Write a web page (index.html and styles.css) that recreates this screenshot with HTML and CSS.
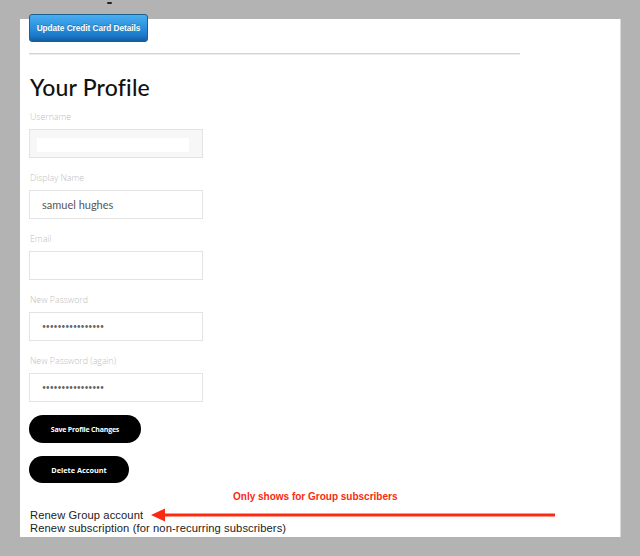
FILE: index.html
```html
<!DOCTYPE html>
<html>
<head>
<meta charset="utf-8">
<link rel="stylesheet" href="styles.css">
</head>
<body>
<div class="peek"></div>
<div class="panel">
  <button class="btn-blue">Update Credit Card Details</button>
  <div class="rule"></div>
  <h1 class="title">Your Profile</h1>
  <div class="fields">
    <div class="field">
      <label class="label">Username</label>
      <div class="box box-disabled"><div class="inner"></div></div>
    </div>
    <div class="field">
      <label class="label">Display Name</label>
      <div class="box">samuel hughes</div>
    </div>
    <div class="field">
      <label class="label">Email</label>
      <div class="box"></div>
    </div>
    <div class="field">
      <label class="label">New Password</label>
      <div class="box dots">••••••••••••••••</div>
    </div>
    <div class="field">
      <label class="label">New Password (again)</label>
      <div class="box dots">••••••••••••••••</div>
    </div>
  </div>
  <div class="actions">
    <button class="btn-black btn-save">Save Profile Changes</button>
    <button class="btn-black btn-delete">Delete Account</button>
  </div>
  <div class="renew">
    <div class="note">Only shows for Group subscribers</div>
    <div class="link-line">Renew Group account</div>
    <div class="link-line">Renew subscription (for non-recurring subscribers)</div>
    <svg class="arrow" width="404" height="16" viewBox="0 0 404 16">
      <polygon points="0,8 14,1.5 14,14.5" fill="#fb2a12"/>
      <rect x="12" y="6.5" width="392" height="3" fill="#fb2a12"/>
    </svg>
  </div>
</div>
</body>
</html>
```
FILE: styles.css
```css
* { box-sizing: border-box; }
html, body { margin: 0; padding: 0; }
body {
  background: #b3b3b3;
  width: 640px;
  height: 556px;
  overflow: hidden;
  font-family: "Open Sans", "Liberation Sans", sans-serif;
}
.peek {
  width: 5px;
  height: 2px;
  margin-left: 107px;
  margin-top: 2px;
  background: #222;
  border-radius: 1px;
}
.panel {
  display: flow-root;
  position: relative;
  margin-left: 20px;
  margin-top: 15px;
  width: 601px;
  height: 518px;
  background: #fff;
  border-right: 1px solid #d9d9d9;
  padding-left: 9px;
}
.btn-blue {
  display: block;
  margin-top: -5px;
  width: 119px;
  height: 28px;
  border: 1px solid #1b5f93;
  border-radius: 3px;
  background: linear-gradient(#49aef0 0%, #2a8fdc 50%, #1b78c8 80%, #125e9e 100%);
  color: #fff;
  font-family: "Liberation Sans", sans-serif;
  font-weight: bold;
  font-size: 8.2px;
  padding: 0;
  text-shadow: 0 -1px 0 rgba(0,0,0,0.2);
}
.rule {
  width: 491px;
  height: 1px;
  margin-top: 11px;
  background: #d4d4d4;
  box-shadow: 0 1px 0 #ececec;
}
.title {
  margin: 19px 0 0 1px;
  font-family: "Lato", sans-serif;
  font-weight: 500;
  font-size: 23px;
  line-height: 28px;
  color: #111;
  letter-spacing: 0.2px;
}
.fields {
  display: flex;
  flex-direction: column;
  gap: 14px;
  margin-top: 10px;
}
.field {
  display: flex;
  flex-direction: column;
  gap: 6px;
}
.label {
  display: block;
  height: 12px;
  line-height: 12px;
  font-size: 8.8px;
  font-weight: 300;
  color: #bdbdbd;
  padding-left: 1px;
  font-family: "Open Sans", sans-serif;
}
.box {
  width: 174px;
  height: 29px;
  border: 1px solid #e3e3e3;
  background: #fff;
  font-size: 11px;
  color: #555;
  line-height: 27px;
  padding-left: 12px;
  font-family: "Lato", sans-serif;
}
.box-disabled {
  background: #f7f7f7;
  padding: 8px 13px 5px 7px;
}
.inner {
  height: 14px;
  background: #fff;
}
.dots {
  font-size: 7px;
  letter-spacing: -0.2px;
  color: #666;
}
.actions {
  display: flex;
  flex-direction: column;
  align-items: flex-start;
  gap: 13px;
  margin-top: 13px;
}
.btn-black {
  height: 28px;
  border: none;
  border-radius: 14px;
  background: #000;
  color: #fff;
  font-family: "Open Sans", sans-serif;
  font-weight: bold;
  font-size: 7px;
  padding: 0;
}
.btn-save { width: 112px; letter-spacing: -0.2px; }
.btn-delete { width: 100px; height: 27px; font-size: 7.3px; }
.renew {
  position: relative;
  margin-top: 8px;
}
.note {
  margin-left: 204px;
  height: 12px;
  line-height: 12px;
  font-family: "Liberation Sans", sans-serif;
  font-weight: bold;
  font-size: 10px;
  color: #fb2a12;
}
.link-line {
  font-family: "Liberation Sans", sans-serif;
  font-size: 11.2px;
  line-height: 13px;
  letter-spacing: 0.1px;
  color: #222;
  padding-left: 1px;
}
.note + .link-line { margin-top: 6px; }
.arrow {
  position: absolute;
  left: 122px;
  top: 16px;
}
```
